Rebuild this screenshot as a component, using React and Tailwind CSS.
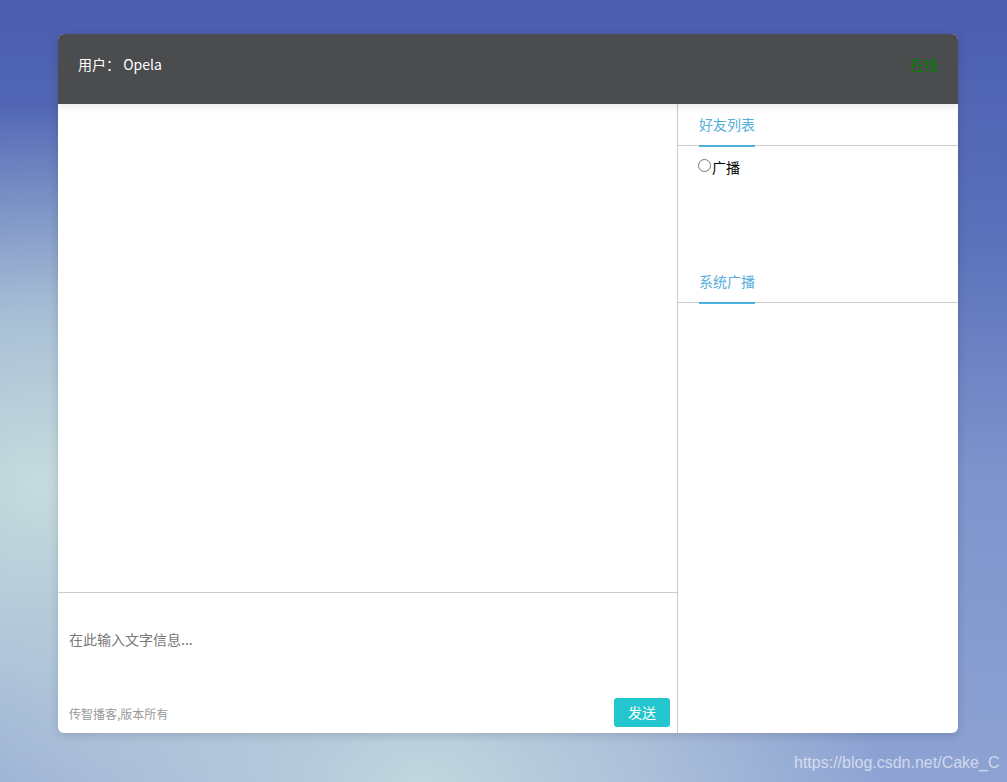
import React from "react";

export default function App() {
  return (
    <div
      className="relative w-[1007px] h-[782px] overflow-hidden bg-[radial-gradient(ellipse_420px_380px_at_4%_62%,#c5dbdd_0%,rgba(190,212,220,0.75)_45%,rgba(180,200,220,0)_100%),radial-gradient(ellipse_460px_280px_at_42%_100%,#c2d6de_0%,rgba(190,210,222,0.6)_50%,rgba(180,200,220,0)_100%),linear-gradient(180deg,#4a5db0_0%,#5a71bb_30%,#7d93cc_60%,#8ea3d3_100%)]"
      style={{ fontFamily: '"Microsoft YaHei", "Noto Sans CJK SC", "Liberation Sans", sans-serif' }}
    >
      <div className="absolute left-[58px] top-[34px] w-[900px] h-[699px] rounded-[6px] bg-white shadow-[0_2px_10px_rgba(0,0,0,0.15)] overflow-hidden flex flex-col">
        <div className="h-[70px] shrink-0 bg-[#4b4c4e] flex items-start justify-between pt-[19px] px-[20px] shadow-[0_4px_8px_rgba(0,0,0,0.08)] relative z-10">
          <div className="text-white text-[14px] leading-[22px]">
            用户：&nbsp;Opela
          </div>
          <div className="text-[#008000] text-[14px] leading-[22px]">在线</div>
        </div>
        <div className="flex flex-1 min-h-0">
          <div className="w-[619px] flex flex-col">
            <div className="h-[489px] border-b border-[#cccccc]"></div>
            <div className="flex-1 flex flex-col px-[11px]">
              <div className="text-[14px] text-[#777777] mt-[36px]">在此输入文字信息...</div>
              <div className="mt-auto mb-[6px] flex items-end justify-between">
                <div className="text-[12px] text-[#999999] mb-[4px]">传智播客,版本所有</div>
                <button className="w-[56px] h-[29px] rounded-[3px] bg-[#22c6cc] text-white text-[14px] -mr-[4px]">
                  发送
                </button>
              </div>
            </div>
          </div>
          <div className="flex-1 border-l border-[#cccccc] flex flex-col">
            <div className="h-[42px] border-b border-[#cccccc] px-[21px] flex">
              <div className="relative h-full flex items-center text-[14px] text-[#55aedb]">
                好友列表
                <div className="absolute left-0 right-0 -bottom-[2px] h-[2px] bg-[#4ab3df]"></div>
              </div>
            </div>
            <div className="h-[115px] px-[20px] pt-[11px]">
              <label className="flex items-center text-[14px] text-black">
                <span className="inline-block w-[13px] h-[13px] rounded-full border border-[#767676] mr-[1px] -mt-[4px]"></span>
                广播
              </label>
            </div>
            <div className="h-[42px] border-b border-[#cccccc] px-[21px] flex">
              <div className="relative h-full flex items-center text-[14px] text-[#55aedb]">
                系统广播
                <div className="absolute left-0 right-0 -bottom-[2px] h-[2px] bg-[#4ab3df]"></div>
              </div>
            </div>
          </div>
        </div>
      </div>
      <div className="absolute left-[794px] top-[751px] text-[16px] text-white/60" style={{ fontFamily: '"Liberation Sans", Arial, sans-serif' }}>
        https://blog.csdn.net/Cake_C
      </div>
    </div>
  );
}
